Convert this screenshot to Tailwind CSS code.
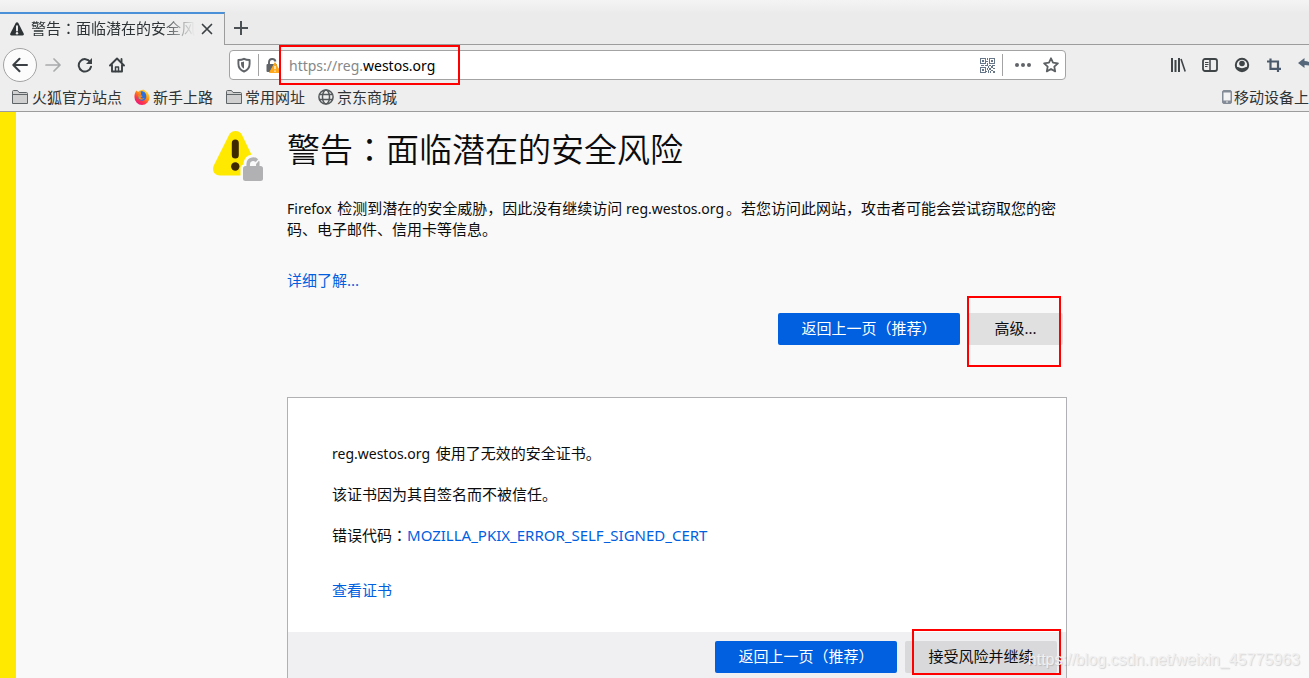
<!DOCTYPE html>
<html lang="zh-CN">
<head>
<meta charset="utf-8">
<title>警告：面临潜在的安全风险</title>
<script src="https://cdn.jsdelivr.net/npm/@tailwindcss/browser@4"></script>
</head>
<body class="relative flex min-h-screen flex-col overflow-x-hidden bg-[#f9f9fa] font-['Noto_Sans','Noto_Sans_CJK_SC',sans-serif] text-[15px] leading-[21px] text-[#0c0c0d]">

<header class="overflow-hidden border-b border-[#9c9c9c] bg-[#eeeeee] text-[#2e3436]">
  <!-- Tab strip -->
  <div class="flex h-[45px] items-end bg-gradient-to-b from-[#f4f4f4] to-[#ebebeb] to-30%">
    <div class="flex h-[33px] w-[225px] shrink-0 items-center border-t-2 border-r border-t-[#4a90d9] border-r-[#9c9c9c] bg-[#eeeeee] pb-[2px] pl-[9px]">
      <svg class="mr-[6px] size-4 shrink-0" viewBox="0 0 16 16"><path d="M8 1.200c.6 0 1 .3 1.300.8l5.400 10.600c.5 1-.1 2-1.200 2h-11c-1.100 0-1.700-1-1.200-2L6.700 2c.3-.5.700-.8 1.300-.8z" fill="#2e3436"/><path d="M8 5.200v4.300" stroke="#eee" stroke-width="2" stroke-linecap="round"/><circle cx="8" cy="12.300" r="1.200" fill="#eee"/></svg>
      <span class="w-[164px] overflow-hidden whitespace-nowrap [mask-image:linear-gradient(to_right,black_130px,transparent_164px)]">警告<span lang="zh-TW" class="font-['Noto_Sans_CJK_TC',sans-serif] leading-none">：</span>面临潜在的安全风</span>
      <button aria-label="关闭标签页" class="ml-[6px] shrink-0"><svg class="size-3" viewBox="0 0 12 12"><path d="M1.500 1.500l9 9m0-9l-9 9" stroke="#3c4144" stroke-width="1.700" stroke-linecap="round"/></svg></button>
    </div>
    <div class="flex h-[33px] flex-1 items-center border-b border-[#9c9c9c] pl-2">
      <button aria-label="新建标签页"><svg class="size-4" viewBox="0 0 16 16"><path d="M8 1v14M1 8h14" stroke="#4a5053" stroke-width="2"/></svg></button>
    </div>
  </div>

  <!-- Navigation bar -->
  <div class="flex h-10 items-center pl-[3px]">
    <button aria-label="后退" class="flex size-[34px] shrink-0 items-center justify-center rounded-full border border-[#a3a3a3] bg-[#fcfcfc]"><svg class="size-4" viewBox="0 0 16 16" fill="none" stroke="#3a4043" stroke-width="2" stroke-linecap="round" stroke-linejoin="round"><path d="M15 8H1.500M7.500 1.800L1.300 8l6.200 6.200"/></svg></button>
    <button aria-label="前进" class="ml-2 shrink-0"><svg class="size-4" viewBox="0 0 16 16" fill="none" stroke="#a9abac" stroke-width="1.700" stroke-linecap="round" stroke-linejoin="round"><path d="M1 8h14M9 2l6 6-6 6"/></svg></button>
    <button aria-label="刷新" class="ml-4 shrink-0"><svg class="size-4" viewBox="0 0 16 16" fill="none" stroke="#3a4043" stroke-width="2"><path d="M13.200 5A6.200 6.200 0 1 0 14 9.700" stroke-linecap="round"/><path d="M15 1v6H9z" fill="#3a4043" stroke="none"/></svg></button>
    <button aria-label="主页" class="ml-4 shrink-0"><svg class="size-4" viewBox="0 0 16 16" fill="none" stroke="#3a4043" stroke-width="1.900" stroke-linecap="round" stroke-linejoin="round"><path d="M1 8.500L8 1.500l7 7M3 8v6.500h10V8"/><path d="M6.500 14.500V10h3v4.500" stroke-width="1.500"/><path d="M12.500 2v3"/></svg></button>

    <div class="mr-[104px] ml-[104px] flex h-[30px] min-w-0 flex-1 items-center rounded-[4px] border border-[#a3a3a3] bg-white px-[6px]">
      <svg class="size-4 shrink-0" viewBox="0 0 16 16"><path d="M8 1.800c1.700.9 3.500 1.200 5.600 1.200v3.700c0 4-2 6.500-5.600 7.800-3.600-1.300-5.600-3.800-5.600-7.800V3c2.100 0 3.900-.3 5.600-1.200z" fill="none" stroke="#606468" stroke-width="1.900" stroke-linejoin="round"/><path d="M8 4.500v7.300C6 10.800 5 9.200 5 6.600V5.200c1.100 0 2-.2 3-.7z" fill="#606468"/></svg>
      <span class="mx-[6px] h-[22px] w-px shrink-0 bg-[#a3a3a3]"></span>
      <svg class="mr-[9px] h-4 w-[15px] shrink-0" viewBox="0 0 15 16"><path d="M4 7V5a3.300 3.300 0 0 1 6.500-.5" fill="none" stroke="#606468" stroke-width="1.900"/><rect x="1.500" y="7" width="10.500" height="8" rx="1" fill="#606468"/><path d="M10 5.700L15.500 15.700h-11z" fill="#ffa81a" stroke="#ffa81a" stroke-linejoin="round"/><path d="M10 9v3.200m0 1.300v1.300" stroke="#fff" stroke-width="1.300"/></svg>
      <div class="relative h-[26px] min-w-0 flex-1 text-[14px] leading-[28px]">
        <input aria-label="网址" value="https://reg.westos.org" class="absolute inset-0 w-full bg-transparent text-transparent outline-none">
        <span class="pointer-events-none text-[#85878a]" aria-hidden="true">https://reg.<span class="text-black">westos.org</span></span>
      </div>
      <button aria-label="二维码" class="shrink-0"><svg class="h-[15px] w-[15px]" viewBox="0 0 15 15" fill="#68768a" shape-rendering="crispEdges"><path fill-rule="evenodd" d="M0 0h6v6H0zM1 1v4h4V1zM9 0h6v6H9zM10 1v4h4V1zM0 9h6v6H0zM1 10v4h4v-4zM2 2h2v2H2zM11 2h2v2h-2zM2 11h2v2H2z"/><path d="M7 0h1v2H7zM6 3h2v1H6zM7 5h1v3H7zM1 7h3v1H1zM5 7h2v1H5zM9 7h2v1H9zM12 7h3v1h-3zM8 8h1v2H8zM11 8h2v2h-2zM7 10h1v2H7zM9 10h2v2H9zM13 10h2v1h-2zM8 12h1v3H8zM11 12h2v1h-2zM10 13h1v2h-1zM13 13h2v2h-2zM6 13h1v1H6z"/></svg></button>
      <span class="mr-[11px] ml-[7px] h-[22px] w-px shrink-0 bg-[#a3a3a3]"></span>
      <button aria-label="页面操作" class="shrink-0"><svg class="size-[18px]" viewBox="0 0 18 18" fill="#606468"><circle cx="3" cy="9" r="2"/><circle cx="9" cy="9" r="2"/><circle cx="15" cy="9" r="2"/></svg></button>
      <button aria-label="为此页添加书签" class="ml-[11px] shrink-0"><svg class="size-4" viewBox="0 0 16 16"><path d="M8 1.300l2 4.400 4.900.6-3.600 3.300.9 4.800L8 12l-4.200 2.400.9-4.800L1.100 6.300 6 5.700z" fill="none" stroke="#5c6063" stroke-width="1.800" stroke-linejoin="round"/></svg></button>
    </div>

    <div class="-mr-[5px] flex shrink-0 gap-4">
      <button aria-label="书库"><svg class="size-4" viewBox="0 0 16 16" stroke="#3f4547" stroke-width="2"><path d="M2 1v14M5.500 3v12M9 1v14" /><path d="M11 2l4.200 12.500" stroke-width="1.600"/></svg></button>
      <button aria-label="侧栏"><svg class="size-4" viewBox="0 0 16 16" fill="none" stroke="#3f4547"><rect x="1" y="2" width="14" height="12" rx="2" stroke-width="1.800"/><path d="M8 2v12" stroke-width="1.500"/><path d="M3 5.500h3.500M3 7.500h3.500M3 9.500h2.500" stroke-width="1"/></svg></button>
      <button aria-label="账户"><svg class="size-4" viewBox="0 0 16 16"><circle cx="8" cy="8" r="6.200" fill="none" stroke="#3f4547" stroke-width="2"/><circle cx="8" cy="6.500" r="2.800" fill="#3f4547"/><path d="M2.800 10.200c1.500-1 3.500 1 5.200 1s3.700-2 5.200-1c-.8 2.400-2.700 4-5.200 4s-4.400-1.600-5.200-4z" fill="#3f4547"/></svg></button>
      <button aria-label="截图"><svg class="size-4" viewBox="0 0 16 16" fill="none" stroke="#4a5a6c" stroke-width="2.200"><path d="M1 4.500h11v10.500M4.500 1.500v10.300h10.500"/></svg></button>
      <button aria-label="撤销"><svg class="size-4" viewBox="0 0 16 16"><path d="M0 6l6.500-5v3C12 4 15 7 15 12c-2-3-4-4-8.500-4v3z" fill="#56677c"/></svg></button>
    </div>
  </div>

  <!-- Bookmarks bar -->
  <nav class="flex h-[26px] items-center pb-[2px] pl-3 whitespace-nowrap">
    <svg class="h-[14px] w-4 shrink-0" viewBox="0 0 16 14"><path d="M.5 13.500V1.500c0-.6.400-1 1-1h4l1.500 2h7.500c.6 0 1 .4 1 1v10z" fill="#d0d0d0" stroke="#5f6466"/><path d="M.5 4.500h15" stroke="#5f6466"/></svg>
    <a href="#" class="ml-1">火狐官方站点</a>
    <svg class="ml-3 size-4 shrink-0" viewBox="0 0 16 16"><defs><linearGradient id="fx" x1=".9" y1="0" x2=".2" y2="1"><stop offset="0" stop-color="#fff44f"/><stop offset=".4" stop-color="#ff980e"/><stop offset=".7" stop-color="#ff3647"/><stop offset="1" stop-color="#e31587"/></linearGradient></defs><path d="M1.500 3l1-1.500L4 3c1-1 2-1.500 3-1.700L9.500.5l2 1.500c2.500 1.500 4 4 4 6.500A7.500 7.500 0 0 1 .5 8.500C.4 6.500.7 4.500 1.500 3z" fill="url(#fx)"/><path d="M6.500 2.500c3-1 6 1.500 5.800 5a4.300 4.300 0 0 1-7.900 2.300C3.500 8 4 6.500 5 6l2.300-.3z" fill="#2a6fe0"/><path d="M4 6l3.500.2 1 1.300-2 1C7.500 10 9.500 9.500 10.500 9c-1 2-4.500 2.500-6 .3z" fill="#ff8a16"/></svg>
    <a href="#" class="ml-[3px]">新手上路</a>
    <svg class="ml-[13px] h-[14px] w-4 shrink-0" viewBox="0 0 16 14"><path d="M.5 13.500V1.500c0-.6.400-1 1-1h4l1.500 2h7.500c.6 0 1 .4 1 1v10z" fill="#d0d0d0" stroke="#5f6466"/><path d="M.5 4.500h15" stroke="#5f6466"/></svg>
    <a href="#" class="ml-[3px]">常用网址</a>
    <svg class="ml-[13px] size-4 shrink-0" viewBox="0 0 16 16" fill="none" stroke="#54595b" stroke-width="1.500"><circle cx="8" cy="8" r="7.100"/><ellipse cx="8" cy="8" rx="3.500" ry="7"/><path d="M1.500 5.500h13M1.500 10.500h13"/></svg>
    <a href="#" class="ml-[3px]">京东商城</a>
    <svg class="ml-auto h-[14px] w-[10px] shrink-0" viewBox="0 0 10 14"><rect x=".5" y=".5" width="9" height="13" rx="1.500" fill="#848c98" stroke="#848c98"/><path d="M1.500 2.500h7v8h-7z" fill="#f4f4f4"/><path d="M4 12h2" stroke="#eee"/></svg>
    <a href="#" class="ml-[2px]">移动设备上</a>
  </nav>
</header>

<main class="flex flex-1 justify-center border-l-16 border-[#ffe900] pt-4 pr-[45px]">
  <div class="grid w-full max-w-[854px] grid-cols-[74px_minmax(0,1fr)]">
    <svg class="mt-[2px] h-[52px] w-[52px]" viewBox="0 0 52 52"><path d="M22.500 1c3 0 5.200 1.500 6.500 4l14.500 30c2.500 5.500 0 10.500-6 10.500H7c-6 0-8.500-5-6-10.500L16 5c1.300-2.500 3.500-4 6.500-4z" fill="#ffe900"/><path d="M22.300 13v12" stroke="#3e2800" stroke-width="7" stroke-linecap="round"/><circle cx="22.300" cy="36.500" r="4.200" fill="#3e2800"/><path d="M32 51c-3 0-4.500-1-4.500-4v-8c0-3 1-4 3-4.500 0-6 4-10 9.500-10s10 4 10 10c2 .5 2 1.500 2 4v12z" fill="#f9f9fa"/><path d="M35.200 37v-3a5 5 0 0 1 9.600-1.800V37" fill="none" stroke="#b1b1b3" stroke-width="3.500"/><path d="M42.500 33.500l3.500-4" stroke="#f9f9fa" stroke-width="1.500"/><rect x="30" y="36" width="20" height="15" rx="2.500" fill="#b1b1b3"/></svg>

    <div class="flex flex-col">
      <h1 class="text-[33px] leading-[44px] font-[350] whitespace-nowrap">警告<span lang="zh-TW" class="font-['Noto_Sans_CJK_TC',sans-serif] leading-none">：</span>面临潜在的安全风险</h1>
      <p class="mt-[26px]"><span class="mr-[2px] text-[14px] leading-none">Firefox </span>检测到潜在的安全威胁，因此没有继续访问<span class="mr-[2px] text-[14px] leading-none"> reg.westos.org</span>。若您访问此网站，攻击者可能会尝试窃取您的密码、电子邮件、信用卡等信息。</p>
      <p class="mt-[30px]"><a href="#" class="text-[#0060df]">详细了解...</a></p>
      <div class="mt-[22px] mr-1 flex justify-end gap-2">
        <button class="h-8 w-[182px] rounded-[2px] bg-[#0060df] pb-[2px] text-white">返回上一页（推荐）</button>
        <button class="h-8 w-[95px] rounded-[2px] bg-[#e0e0e1] pb-[2px]">高级...</button>
      </div>

      <section class="mt-[52px] flex flex-1 flex-col border border-b-0 border-[#b1b1b3] bg-white">
        <div class="flex flex-col gap-5 px-11 pt-[45px] pb-[31px]">
          <p><span class="mr-[2px] text-[14px] leading-none">reg.westos.org </span>使用了无效的安全证书。</p>
          <p>该证书因为其自签名而不被信任。</p>
          <p>错误代码<span lang="zh-TW" class="font-['Noto_Sans_CJK_TC',sans-serif] leading-none">：</span><a href="#" class="text-[#0060df]">MOZILLA_PKIX_ERROR_SELF_SIGNED_CERT</a></p>
          <p class="mt-[14px]"><a href="#" class="text-[#0060df]">查看证书</a></p>
        </div>
        <div class="flex flex-1 items-start justify-end gap-2 bg-[#f0f0f3] pt-[9px] pr-[9px] pb-[4px]">
          <button class="h-8 w-[182px] rounded-[2px] bg-[#0060df] pb-[2px] text-white">返回上一页（推荐）</button>
          <button class="h-8 w-[152px] rounded-[2px] bg-[#d9d9db] pb-[2px]">接受风险并继续</button>
        </div>
      </section>
    </div>
  </div>
</main>

<!-- Highlight boxes and watermark laid over the window -->
<div class="pointer-events-none absolute top-[45px] left-[279px] h-10 w-[181px] border-2 border-[#ff0000]"></div>
<div class="pointer-events-none absolute top-[296px] left-[967px] h-[71px] w-[94px] border-2 border-[#ff0000]"></div>
<div class="pointer-events-none absolute top-[629px] left-[912px] h-[46px] w-[149px] border-2 border-[#ff0000]"></div>
<div class="pointer-events-none absolute right-[9px] bottom-2 font-['Liberation_Sans',sans-serif] text-[16px] text-[#f0f0f0] [text-shadow:1px_1px_1px_rgba(0,0,0,0.15)]">https://blog.csdn.net/weixin_45775963</div>
</body>
</html>
